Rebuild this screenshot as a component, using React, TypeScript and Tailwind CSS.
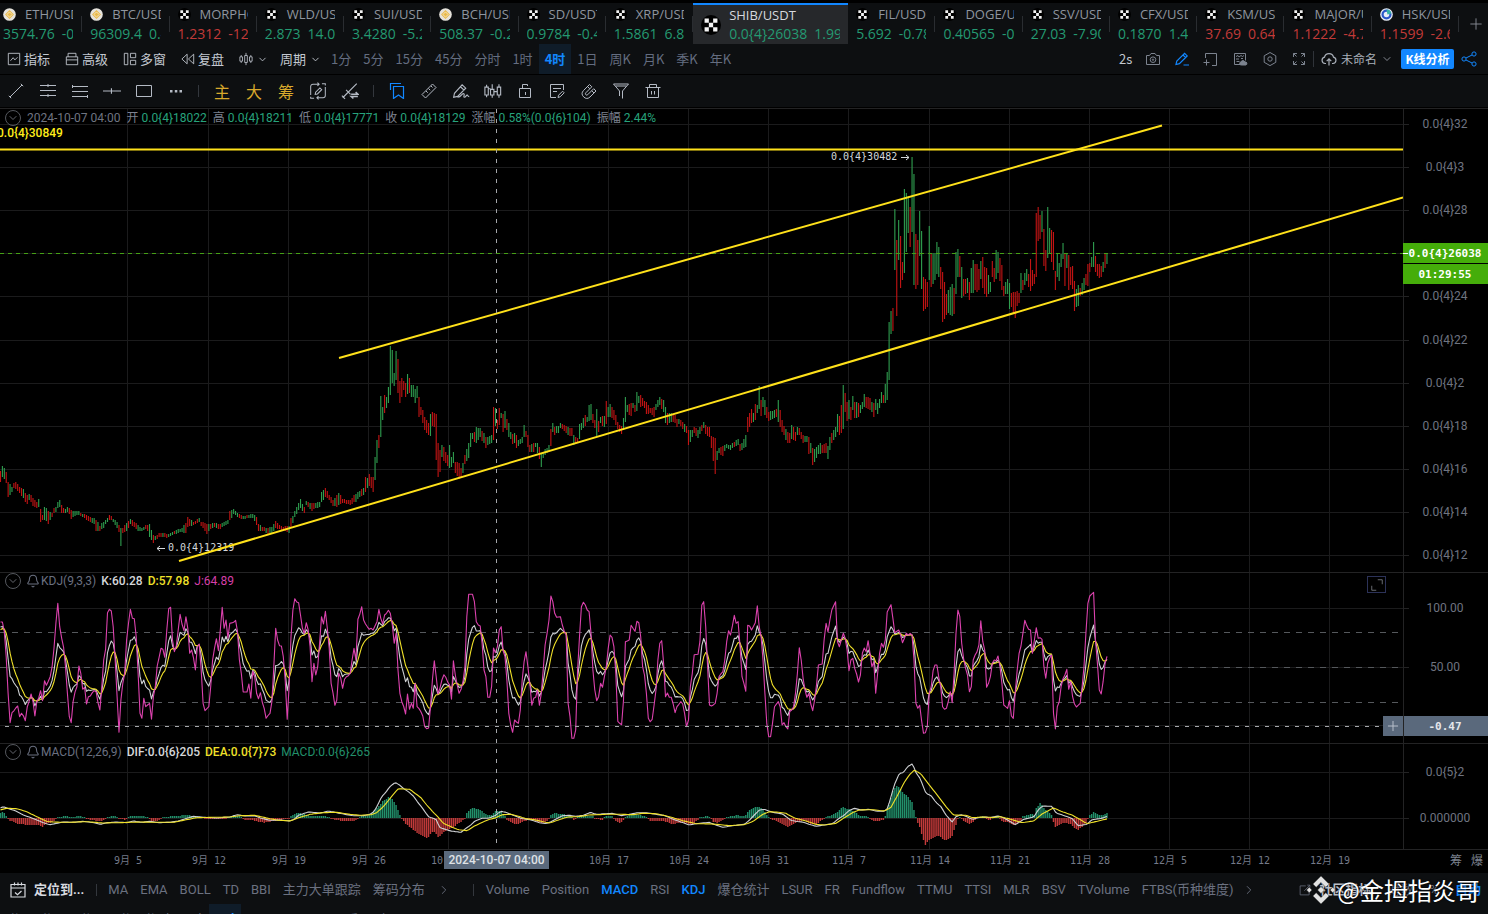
import type { ReactNode } from "react";
import { ChevronDown, ChevronRight, Plus, Bell } from "lucide-react";

/* ------------------------------------------------------------------ */
/* Icons                                                               */
/* ------------------------------------------------------------------ */

function Icon({ children, className = "size-4" }: { children: ReactNode; className?: string }) {
  return (
    <svg viewBox="0 0 16 16" className={className} fill="none" stroke="currentColor" strokeWidth="1" aria-hidden="true">
      {children}
    </svg>
  );
}

function CoinIcon({ kind, className }: { kind: string; className: string }) {
  if (kind === "gold") {
    return (
      <svg viewBox="0 0 14 14" className={className} aria-hidden="true">
        <circle cx="7" cy="7" r="6.8" fill="#e6e3dc" />
        <path d="M7 2.2 11.8 7 7 11.8 2.2 7z" fill="#e9b949" />
        <path d="M7 4.2 9.8 7 7 9.8 4.2 7z" fill="none" stroke="#f4ead0" strokeWidth="0.9" />
      </svg>
    );
  }
  if (kind === "ring") {
    return (
      <svg viewBox="0 0 14 14" className={className} aria-hidden="true">
        <circle cx="7" cy="7" r="6.8" fill="#e8edf6" />
        <circle cx="7" cy="7" r="4.2" fill="none" stroke="#2b57c8" strokeWidth="2.4" />
        <circle cx="7" cy="7" r="2" fill="#e8edf6" />
        <path d="M7 1.600 A5.400 5.400 0 0 1 12.200 6 L8 7z" fill="#35b3a4" />
      </svg>
    );
  }
  return (
    <svg viewBox="0 0 14 14" className={className} aria-hidden="true">
      <circle cx="7" cy="7" r="7" fill="#000" />
      <path d="M2.500 2.500h3v3h-3zM8.500 2.500h3v3h-3zM5.500 5.500h3v3h-3zM2.500 8.500h3v3h-3zM8.500 8.500h3v3h-3z" fill="#f2f2f2" />
    </svg>
  );
}

/* ------------------------------------------------------------------ */
/* Market tabs                                                         */
/* ------------------------------------------------------------------ */

type Market = { name: string; price: string; change: string; up: boolean; kind: string; active?: boolean };

const MARKETS: Market[] = [
  { name: "ETH/USDT", price: "3574.76", change: "-0.73%", up: true, kind: "gold" },
  { name: "BTC/USDT", price: "96309.4", change: "0.41%", up: true, kind: "gold" },
  { name: "MORPHO/USDT", price: "1.2312", change: "-12.7%", up: false, kind: "x" },
  { name: "WLD/USDT", price: "2.873", change: "14.05%", up: true, kind: "x" },
  { name: "SUI/USDT", price: "3.4280", change: "-5.27%", up: true, kind: "x" },
  { name: "BCH/USDT", price: "508.37", change: "-0.24%", up: true, kind: "gold" },
  { name: "SD/USDT", price: "0.9784", change: "-0.45%", up: true, kind: "x" },
  { name: "XRP/USDT", price: "1.5861", change: "6.81%", up: true, kind: "x" },
  { name: "SHIB/USDT", price: "0.0{4}26038", change: "1.99%", up: true, kind: "x", active: true },
  { name: "FIL/USDT", price: "5.692", change: "-0.78%", up: true, kind: "x" },
  { name: "DOGE/USDT", price: "0.40565", change: "-0.52%", up: true, kind: "x" },
  { name: "SSV/USDT", price: "27.03", change: "-7.90%", up: true, kind: "x" },
  { name: "CFX/USDT", price: "0.1870", change: "1.41%", up: true, kind: "x" },
  { name: "KSM/USDT", price: "37.69", change: "0.64%", up: false, kind: "x" },
  { name: "MAJOR/USDT", price: "1.1222", change: "-4.71%", up: false, kind: "x" },
  { name: "HSK/USDT", price: "1.1599", change: "-2.63%", up: false, kind: "ring" },
];

function MarketTab({ market }: { market: Market }) {
  const tone = market.up ? "text-[#249a72]" : "text-[#c23a38]";
  if (market.active) {
    return (
      <button
        type="button"
        aria-pressed="true"
        className="flex w-[155px] shrink-0 items-center gap-2 border-t-2 border-[#1287ff] bg-[#26282b] pr-2 pl-2"
      >
        <CoinIcon kind={market.kind} className="size-5 shrink-0" />
        <span className="flex min-w-0 flex-col overflow-hidden text-left">
          <span className="h-[18px] text-[13px] leading-[18px] font-medium text-[#d6d9de]">{market.name}</span>
          <span className={`flex h-[19px] gap-[7px] text-[14px] leading-[19px] whitespace-nowrap ${tone}`}>
            <span>{market.price}</span>
            <span>{market.change}</span>
          </span>
        </span>
      </button>
    );
  }
  return (
    <button type="button" className="flex min-w-[70px] flex-1 items-center pl-2">
      <span className="flex min-w-0 flex-1 flex-col overflow-hidden text-left whitespace-nowrap">
        <span className="flex h-[19px] items-center gap-[9px]">
          <CoinIcon kind={market.kind} className="size-[13px] shrink-0" />
          <span className="text-[13px] leading-[19px] text-[#8f959f]">{market.name}</span>
        </span>
        <span className={`flex h-[19px] gap-[7px] text-[14px] leading-[19px] ${tone}`}>
          <span>{market.price}</span>
          <span>{market.change}</span>
        </span>
      </span>
      <span className="ml-2 h-4 w-px shrink-0 bg-[#2a2d31]" />
    </button>
  );
}

function MarketStrip() {
  return (
    <nav aria-label="行情" className="flex h-[41px] shrink-0 overflow-hidden bg-[#0d0f11] font-['Open_Sans','Noto_Sans_CJK_SC',sans-serif]">
      <div className="-ml-[5px] flex min-w-0 flex-1">
        {MARKETS.map((m) => (
          <MarketTab key={m.name} market={m} />
        ))}
      </div>
      <button type="button" aria-label="添加" className="flex w-[29px] shrink-0 items-center justify-center pl-1 text-[#8a8f98]">
        <Plus className="size-[18px]" strokeWidth={1.2} />
      </button>
    </nav>
  );
}

/* ------------------------------------------------------------------ */
/* Main toolbar                                                        */
/* ------------------------------------------------------------------ */

const INTERVALS = ["1分", "5分", "15分", "45分", "分时", "1时", "4时", "1日", "周K", "月K", "季K", "年K"];

function IntervalRow() {
  return (
    <div className="flex h-full">
      {INTERVALS.map((label) => (
        <button
          key={label}
          type="button"
          className={
            label === "4时"
              ? "bg-[#0f1c29] px-1.5 font-bold text-[#1287ff]"
              : "px-1.5 text-[#646d80]"
          }
        >
          {label}
        </button>
      ))}
    </div>
  );
}

function TextTool({ label, children }: { label: string; children: ReactNode }) {
  return (
    <button type="button" className="flex items-center gap-[3px] text-[#c3c8d0]">
      <Icon className="size-[14px]">{children}</Icon>
      <span>{label}</span>
    </button>
  );
}

function MainToolbar() {
  return (
    <div className="flex h-[30px] shrink-0 items-stretch bg-[#0d0f11] text-[13px] whitespace-nowrap">
      <div className="flex gap-[15px] pl-[7px]">
        <TextTool label="指标">
          <path d="M1.5 1.5h13v13h-13zM4 10l3-3.5 2 2.5 3-3" />
        </TextTool>
        <TextTool label="高级">
          <path d="M1.5 5.5h13v9h-13zM3.5 5.5v-4h9v4M1.5 9h13" />
        </TextTool>
        <TextTool label="多窗">
          <path d="M1.5 1.5h4v13h-4zM8.5 1.5h6v5h-6zM8.5 9.5h6v5h-6z" />
        </TextTool>
        <TextTool label="复盘">
          <path d="M7 2.5v11L1 8zM14.5 2.5v11L8.5 8z" />
        </TextTool>
        <div className="flex gap-3">
          <button type="button" aria-label="图表类型" className="flex items-center gap-1 text-[#b8bdc6]">
            <Icon className="size-[14px]">
              <path d="M1 5.5h3v5H1zM2.5 3.5v2M2.5 10.5v2M6.5 4h3v8h-3zM8 1v3M8 12v3M12 5.5h3v5h-3zM13.5 3.5v2M13.5 10.5v2" />
            </Icon>
            <ChevronDown className="size-[11px]" />
          </button>
          <button type="button" className="flex items-center gap-1 text-[#c3c8d0]">
            周期
            <ChevronDown className="size-[11px]" />
          </button>
        </div>
      </div>
      <div className="ml-1">
        <IntervalRow />
      </div>
      <div className="ml-auto flex items-center text-[#7c838f]">
        <span className="w-[26px] text-[#c3c8d0]">2s</span>
        <button type="button" aria-label="截图" className="w-[29px]">
          <Icon>
            <path d="M1.5 4.5h3l1.5-2h4l1.5 2h3v9h-13z" />
            <circle cx="8" cy="8.7" r="2.8" />
            <circle cx="8" cy="8.7" r="0.7" />
          </Icon>
        </button>
        <button type="button" aria-label="画线" className="w-[29px] text-[#1287ff]">
          <Icon>
            <path d="M2 13.5l.8-3.4L10.6 2.3l2.6 2.6-7.8 7.8zM9 4l2.6 2.6M9.5 14h5.5" strokeWidth="1.2" />
          </Icon>
        </button>
        <button type="button" aria-label="新建窗口" className="w-[29px]">
          <Icon>
            <path d="M2.5 7V2.500h11v12H9M.5 11.500h6M3.500 8.500v6" />
          </Icon>
        </button>
        <button type="button" aria-label="数据面板" className="w-[30px]">
          <Icon>
            <path d="M2.500 2.500h11v7M8 13.500H2.500v-11M4 5.500l2-1 1 1.500 2-1.500 1.500 1 1.500-1M4 8h3M4.500 10.500h3M9 7.500h2" />
            <path d="M9 11a2 2 0 0 1 3.800 0a1.500 1.500 0 0 1 1 3h-4.500a1.500 1.500 0 0 1-.3-3z" fill="currentColor" />
          </Icon>
        </button>
        <button type="button" aria-label="设置" className="w-[29px]">
          <Icon>
            <path d="M8 1.500l5.800 3.300v6.500L8 14.600l-5.800-3.300V4.800z" />
            <circle cx="8" cy="8" r="2.200" />
          </Icon>
        </button>
        <button type="button" aria-label="全屏" className="w-[22px]">
          <Icon>
            <path d="M2.500 6V2.500H6M2.500 2.500l3 3M10 2.500h3.500V6M13.500 2.500l-3 3M2.500 10v3.500H6M2.500 13.500l3-3M10 13.500h3.500V10M13.500 13.500l-3-3" />
          </Icon>
        </button>
        <span className="mr-[7px] h-4 w-px bg-[#2f3339]" />
        <button type="button" className="flex items-center gap-1 text-[#a9afb9]">
          <Icon>
            <path d="M5 12.500H4A3.200 3.200 0 0 1 3.500 6.200 4.600 4.600 0 0 1 12.500 6.200 3.200 3.200 0 0 1 12 12.500h-1M8 14.500V8M5.700 10.200L8 7.900l2.300 2.300" strokeWidth="1.200" />
          </Icon>
          <span className="text-[12px]">未命名</span>
          <ChevronDown className="size-3" strokeWidth={1.5} />
        </button>
        <button type="button" className="ml-2 h-5 w-[53px] rounded-[2px] bg-[#1287ff] text-[12px] font-bold text-white">
          K线分析
        </button>
        <button type="button" aria-label="分享" className="mr-[11px] ml-[7px] text-[#1287ff]">
          <Icon>
            <circle cx="3" cy="8" r="2.100" />
            <circle cx="13" cy="3" r="2.100" />
            <circle cx="13" cy="13" r="2.100" />
            <path d="M5 7l6-3M5 9l6 3" />
          </Icon>
        </button>
      </div>
    </div>
  );
}

/* ------------------------------------------------------------------ */
/* Drawing toolbar                                                     */
/* ------------------------------------------------------------------ */

function DrawTool({ label, children, tone = "text-[#b4bac4]" }: { label: string; children: ReactNode; tone?: string }) {
  return (
    <button type="button" aria-label={label} className={`flex w-8 items-center justify-center ${tone}`}>
      {children}
    </button>
  );
}

function DrawToolbar() {
  return (
    <div className="mt-px flex h-8 shrink-0 items-stretch bg-[#0d0f11]">
      <DrawTool label="线段">
        <Icon>
          <path d="M2 14L14 2M.8 12.800l2.400 2.400M12.800.8l2.400 2.400" />
        </Icon>
      </DrawTool>
      <DrawTool label="平行线">
        <Icon>
          <path d="M0 2.500h16M0 7.500h16M0 12.500h16" />
          <path d="M7 1.500h2v2H7zM7 11.500h2v2H7z" fill="currentColor" stroke="none" />
        </Icon>
      </DrawTool>
      <DrawTool label="水平通道">
        <Icon>
          <path d="M0 3.500h16M0 8.500h16M0 13.500h16M.5 2v3M15.500 12v3" />
        </Icon>
      </DrawTool>
      <DrawTool label="水平线">
        <Icon className="size-[18px]">
          <path d="M0 8h16M7.500 5.500v5" />
        </Icon>
      </DrawTool>
      <DrawTool label="矩形">
        <Icon>
          <path d="M.5 2.500h15v11H.5z" />
        </Icon>
      </DrawTool>
      <DrawTool label="更多">
        <Icon>
          <path d="M2 7h2.500v2.500H2zM6.800 7h2.500v2.500H6.800zM11.500 7H14v2.500h-2.500z" fill="currentColor" stroke="none" />
        </Icon>
      </DrawTool>
      <span className="mr-[7px] ml-1.5 h-3 w-px self-center bg-[#33373d]" />
      {["主", "大", "筹"].map((t) => (
        <button key={t} type="button" className="w-8 text-[16px] text-[#d9a92c]">
          {t}
        </button>
      ))}
      <DrawTool label="循环画线">
        <Icon className="size-[18px]">
          <path d="M1.500 11.500V4a2 2 0 0 1 2-2H9M7.500.5L9 2 7.500 3.500M14.500 4.500V12a2 2 0 0 1-2 2H7M8.500 12.500L7 14l1.500 1.500M11.500 1.500h3v1.500M1.500 13v1.500h3M5.500 11l.4-2 3.800-3.800 1.600 1.600L7.500 10.600z" strokeWidth="0.9" />
        </Icon>
      </DrawTool>
      <DrawTool label="转换画线">
        <Icon className="size-[18px]">
          <path d="M1.500 14L14 1.500M.8 12.200l2.800 2.800M4.500 7l4 4" />
          <path d="M9 10.800h6l-2-1.800M15 12.800H9l2 1.800" strokeWidth="1.300" />
        </Icon>
      </DrawTool>
      <span className="mx-[7px] h-3 w-px self-center bg-[#33373d]" />
      <DrawTool label="收藏" tone="text-[#1287ff]">
        <Icon>
          <path d="M1.500 7V.5H12M4.500 3.500h10v12l-5-3.500-5 3.500z" strokeWidth="1.200" />
        </Icon>
      </DrawTool>
      <DrawTool label="测量">
        <Icon>
          <path d="M1 11.500L11.500 1l3.500 3.500L4.500 15zM5 8l1.700 1.700M7.500 5.500l1.700 1.700M10 3l1.500 1.500" />
        </Icon>
      </DrawTool>
      <DrawTool label="画笔">
        <Icon className="size-[18px]">
          <path d="M1.500 13.500l.7-3.500L9 2.500l3.200 3L5 12.800zM7.500 4.200l3.200 3M5 13.500c3.500 0 3.500-3.500 5.200-3.200s-.5 3 .8 3.200 1.500-2 2.500-1.800.3 1.300 1.800 1.300" />
        </Icon>
      </DrawTool>
      <DrawTool label="K线样式">
        <Icon className="size-[18px]">
          <path d="M.8 4.500h3v7h-3zM2.300 2.500v2M2.300 11.500v2M5.800 6.500h3v5h-3zM7.300 2v4.500M7.300 11.500V14M11.800 4.500h3v7h-3zM13.300 2v2.500M13.300 11.500V14M3.800 6h2M8.800 8.500h3" />
        </Icon>
      </DrawTool>
      <DrawTool label="锁定">
        <Icon>
          <path d="M2.500 5.500h11v9h-11zM5.500 5.500v-4h5V3M8.500 9v3" />
        </Icon>
      </DrawTool>
      <DrawTool label="编辑">
        <Icon>
          <path d="M14.500 7V1.500H1.500v13H7M4 5.500h8M4 8.500h4M9 14.500l.6-2.300 4-4 1.600 1.600-4 4z" />
        </Icon>
      </DrawTool>
      <DrawTool label="磁吸">
        <Icon>
          <path d="M8.500 1.500L2.500 7.500a4.600 4.600 0 0 0 6.500 6.500L15 8l-2.300-2.300-6 6a1.300 1.300 0 0 1-1.900-1.900l6-6zM6.500 3.500l2.300 2.300M10.700 7.700L13 10" />
        </Icon>
      </DrawTool>
      <DrawTool label="筛选">
        <Icon>
          <path d="M.5 1h15L9.500 8v7.500M6.500 13V8L.5 1M2.500 3h11" />
        </Icon>
      </DrawTool>
      <DrawTool label="删除">
        <Icon>
          <path d="M.5 4.500h15M2.500 4.500v10h11v-10M4.500 4.500v-3h7v3M6.500 8v3.500M9.500 8v3.500" />
        </Icon>
      </DrawTool>
    </div>
  );
}

/* ------------------------------------------------------------------ */
/* Chart data. Runs of samples; x and y are in `unit` parts of a pixel */
/* ------------------------------------------------------------------ */

type Run = { left: number; unit?: number; data: string };
type Sample = number[];

const STEP = 1.911;
const LAST_X = 1108;

function readRuns(runs: Run[]): Sample[] {
  const out: Sample[] = [];
  for (const run of runs) {
    for (const token of run.data.trim().split(/\s+/)) {
      const [x, ...rest] = token.split(",").map(Number);
      out.push([run.left + x / (run.unit ?? 3), ...rest]);
    }
  }
  return out;
}

/* With `snap`, a bar takes the values of a sample that lies within its slot. */
function resample(samples: Sample[], snap = false): Sample[] {
  const out: Sample[] = [];
  let k = 0;
  for (let x = 0.5; x <= LAST_X; x += STEP) {
    while (k < samples.length - 2 && samples[k + 1][0] < x) k++;
    const a = samples[k];
    const b = samples[k + 1];
    let t = Math.min(1, Math.max(0, (x - a[0]) / (b[0] - a[0])));
    if (snap && Math.abs(x - a[0]) <= STEP / 2) t = 0;
    else if (snap && Math.abs(b[0] - x) <= STEP / 2) t = 1;
    out.push([x, ...a.slice(1).map((v, i) => v + (b[i + 1] - v) * t)]);
  }
  return out;
}

const J_RUNS: Run[] = [
  {
    left: 0,
    data: `0,186 5,186 10,176 14,215 18,290 22,400 25,462 31,488 38,458 47,444 55,438 61,470 67,460 77,482 84,440 92,402 98,425 106,468 112,425 124,392 130,422 136,362 140,376 150,350 156,320 160,265 168,190 176,130 181,200 188,262 196,320 202,400 208,470 214,488 220,425 228,380 238,318 244,340 250,388 256,382 260,432 266,410 272,408 280,392 286,395 290,440 295,428 301,450 306,380 311,300 315,268 319,250 324,158 329,148 335,153 340,200 345,300 350,410 358,517 364,420 368,370 376,340 382,240 387,190 391,148 398,175 404,176 409,230 414,340 420,460 427,475 432,415 440,440 446,430 454,478 460,410 466,380 473,318 480,292 485,265 491,268 496,292 502,210 508,146 511,142 516,240 523,275 530,258 536,210 541,163 549,192 554,212 559,170 565,205 568,280 577,270 586,330 592,260 598,252 604,330 610,430 617,452 624,440 630,380 636,300 643,265 649,236 656,272 662,210 667,142 673,205 679,180 685,235 692,190 700,187 706,181 712,215 718,300 724,340 730,396 742,396 748,372 754,415 758,334 764,350 770,400 775,416 782,398 790,445 799,475 808,460 814,425 820,320 826,205 832,240 838,257 845,258 850,290 856,360 862,478 868,380 873,230 877,150 884,116 890,126 896,128 900,165 905,205 912,220 920,188 926,210 931,260 937,365 943,310 946,345 951,320 957,250 963,170 970,192 977,154 983,205 990,265 996,370 1003,436 1008,420 1014,340 1019,335 1027,385 1034,358 1042,350 1052,340 1058,300 1063,265 1067,300 1070,230 1076,178 1084,140 1090,180 1098,192 1106,208 1111,205 1115,256 1121,210 1129,185 1135,148 1141,175 1147,192 1156,165 1166,151 1173,160 1177,195 1184,250 1187,220 1192,330 1200,400 1208,425 1216,462 1223,402 1229,448 1234,430 1240,445 1246,370 1254,440 1262,455 1268,468 1274,500 1280,506 1286,504 1291,440 1297,360 1303,302 1310,350 1317,402 1324,360 1331,344 1338,352 1346,375 1353,418 1361,302 1366,345 1371,375 1376,400 1383,388 1388,365 1393,320 1398,170 1402,125 1406,103 1417,103 1422,125 1428,185 1434,195 1440,198 1447,250 1452,330 1458,350 1464,412 1470,412 1475,380 1480,264 1486,278`,
  },
  {
    left: 496,
    data: `2,260 8,210 13,200 18,255 25,290 31,360 38,460 44,495 50,517 55,480 60,486 67,490 72,450 76,360 82,305 88,275 94,320 99,370 106,436 113,415 119,412 125,390 131,436 137,400 143,330 150,255 157,180 163,108 170,125 176,160 182,172 193,170 200,195 208,225 211,320 215,430 221,470 227,535 232,535 238,510 241,460 246,330 250,230 256,140 260,127 266,135 272,150 278,155 283,220 290,330 297,390 303,422 309,410 316,370 322,382 328,320 334,265 341,225 347,232 353,260 358,340 364,484 370,490 376,494 380,420 384,320 391,245 397,240 403,196 410,205 416,214 422,184 428,188 434,230 440,320 446,345 451,400 457,475 463,485 469,478 475,435 480,390 484,300 490,250 496,242 500,310 506,410 511,388 518,412 524,412 530,432 538,458 545,440 553,425 558,432 564,460 570,500 575,480 580,410 587,340 593,284 606,283 611,245 616,135 622,125 627,200 632,320 637,370 643,435 649,438 656,430 662,400 668,350 680,335 686,300 692,245 700,212 706,225 713,166 719,190 724,185 730,260 736,350 742,370 748,394 752,300 757,196 763,198 769,210 776,188 782,137 788,200 794,230 800,300 806,400 812,490 818,530 826,530 832,490 838,440 844,425 850,440 856,495 862,488 868,500 873,507 878,475 884,455 893,440 898,400 902,340 908,263 914,300 919,355 926,390 934,412 938,400 944,432 951,452 957,420 963,375 970,315 976,312 982,240 988,190 993,187 998,216 1004,180 1010,150 1016,125 1021,180 1027,245 1033,260 1039,220 1046,235 1052,270 1059,332 1066,300 1073,295 1079,325 1086,366 1092,345 1096,295 1102,264 1109,275 1114,242 1120,280 1128,320 1134,305 1142,400 1148,280 1154,250 1162,262 1166,240 1170,165 1178,145 1182,155 1187,134 1192,175 1198,218 1206,210 1212,225 1217,248 1223,235 1228,215 1235,226 1242,220 1249,225 1253,300 1258,430 1264,445 1273,436 1280,520 1286,518 1292,500 1297,400 1304,380 1310,332 1316,315 1324,315 1330,352 1336,380 1342,440 1348,448 1354,445 1361,395 1366,428 1372,340 1378,220 1384,150 1388,128 1393,170 1398,250 1406,325 1412,345 1418,395 1423,380 1428,392 1434,300 1440,285 1450,255 1456,182 1461,245 1468,270 1474,382 1480,370 1486,350`,
  },
  {
    left: 992,
    data: `0,310 7,300 14,302 19,288 24,320 28,370 32,425 38,435 44,445 50,422 55,468 60,468 65,475 70,400 76,330 84,280 92,220 100,181 107,208 112,187 118,210 124,280 128,240 133,203 139,235 146,233 152,238 157,320 163,355 168,310 176,285 180,350 184,460 188,507 192,490 196,440 202,425 208,380 214,356 220,345 226,328 232,388 238,365 244,410 250,432 256,441 262,430 268,380 276,320 283,220 290,130 296,108 302,97 306,150 310,240 316,310 323,390 329,402 336,365 341,310 348,272`,
  },
];

const DIF_RUNS: Run[] = [
  {
    left: 0,
    data: `0,745 10,740 20,744 45,752 70,765 95,774 115,782 135,790 150,794 165,791 190,786 220,787 250,784 280,788 303,793 320,788 350,786 380,788 400,783 425,787 450,784 475,788 510,787 535,783 560,775 580,769 610,772 650,774 690,771 712,764 735,768 765,768 785,775 810,781 840,780 870,783 885,776 895,766 925,756 960,759 985,753 1010,758 1035,763 1060,767 1090,767 1110,763 1122,755 1133,735 1145,710 1157,698 1168,682 1180,671 1187,668 1200,676 1210,685 1225,695 1240,708 1252,725 1268,745 1285,770 1300,775 1310,780 1318,802 1335,808 1353,813 1384,817 1396,806 1410,797 1425,783 1445,775 1465,775 1480,769 1486,767`,
  },
  {
    left: 496,
    data: `5,760 15,754 30,757 50,765 75,775 95,778 110,781 130,788 150,791 165,785 180,777 200,767 220,766 240,769 262,766 283,757 300,763 350,760 375,767 400,763 425,758 460,759 485,764 505,766 530,777 555,786 580,795 600,791 640,787 660,795 680,802 710,797 745,793 760,781 775,765 790,750 805,748 830,757 860,762 885,781 900,784 920,786 940,793 960,799 985,795 1010,791 1025,778 1045,765 1060,751 1075,745 1095,750 1120,748 1140,753 1165,754 1175,745 1185,710 1195,675 1210,640 1222,638 1235,620 1250,611 1258,635 1272,655 1290,700 1305,707 1320,727 1335,740 1350,765 1368,786 1380,770 1395,764 1410,769 1430,778 1450,772 1470,771 1486,774`,
  },
  {
    left: 992,
    data: `0,771 20,768 40,776 70,794 95,778 125,771 140,748 152,738 180,739 192,759 220,768 240,775 258,797 285,793 300,779 330,775 348,768`,
  },
];

const DEA_RUNS: Run[] = [
  {
    left: 0,
    data: `0,750 20,745 50,746 80,755 110,770 140,784 160,786 200,787 260,785 310,789 360,788 420,786 480,787 520,787 555,780 590,773 640,772 690,771 720,767 765,766 800,774 830,780 870,783 900,772 930,763 970,758 1010,757 1050,763 1080,766 1115,764 1130,758 1150,740 1165,722 1180,703 1195,686 1230,688 1245,700 1262,712 1280,735 1300,757 1315,772 1330,790 1350,799 1375,809 1402,812 1420,800 1440,790 1465,779 1486,774`,
  },
  {
    left: 496,
    data: `0,772 20,764 45,763 65,768 90,776 115,779 140,785 160,789 190,779 215,771 245,770 280,765 330,763 380,763 410,764 440,760 480,761 520,770 560,782 600,791 650,792 700,797 745,794 770,785 800,763 820,755 850,757 870,760 895,774 930,783 960,793 985,795 1020,790 1045,773 1070,758 1090,750 1130,749 1165,753 1185,742 1205,705 1225,667 1240,645 1255,630 1275,642 1300,675 1325,707 1350,740 1372,765 1410,766 1430,773 1460,771 1486,772`,
  },
  {
    left: 992,
    data: `0,773 25,770 50,776 90,788 125,783 150,762 185,744 210,755 240,765 265,779 285,791 310,785 348,776`,
  },
];

const HIST_RUNS: Run[] = [
  {
    left: 0,
    data: `0,14 10,18 18,8 24,0 30,-8 55,-18 80,-20 110,-20 128,-26 140,-18 160,-10 170,2 175,4 205,5 212,2 240,6 262,-3 290,-9 303,-10 315,-4 322,4 345,5 355,-3 375,-5 385,4 410,6 440,4 455,-8 470,-9 482,-3 490,4 530,5 545,8 560,10 575,6 600,4 620,-4 650,-4 670,-4 690,3 700,8 720,6 730,-4 760,-7 790,-14 820,-9 850,-4 865,-3 875,8 890,16 910,12 930,7 960,7 980,5 1000,-4 1030,-9 1060,-9 1075,-3 1085,6 1110,8 1120,18 1135,35 1150,52 1165,62 1175,60 1190,35 1200,8 1206,-4 1215,-15 1240,-35 1262,-52 1283,-60 1300,-38 1315,-58 1335,-40 1355,-30 1380,-14 1395,-3 1400,14 1415,30 1430,28 1445,22 1460,10 1475,10 1486,20`,
  },
  {
    left: 496,
    data: `0,20 12,20 25,10 33,-5 50,-16 65,-18 90,-8 110,-6 140,-16 158,-5 163,8 175,14 200,13 225,6 235,-8 250,5 270,7 290,7 300,-4 320,-5 330,5 350,6 358,-8 372,-15 382,-6 390,6 410,10 430,9 450,4 460,-8 485,-8 500,-8 530,-18 560,-13 585,-20 603,-8 615,4 640,5 650,-10 665,-15 680,-8 692,3 720,8 748,6 758,22 775,32 790,32 805,22 815,6 828,-4 850,-14 875,-28 890,-20 905,-12 925,-6 945,-18 960,-20 980,-4 990,4 1010,10 1025,18 1040,34 1052,28 1070,22 1090,8 1115,4 1125,-6 1142,-10 1165,-4 1170,15 1180,40 1190,80 1200,96 1210,92 1225,72 1235,65 1250,44 1256,15 1262,-8 1272,-30 1280,-60 1288,-80 1300,-66 1325,-52 1350,-68 1368,-55 1380,-20 1388,4 1400,-6 1420,-18 1435,-10 1445,4 1465,5 1475,-5 1486,-6`,
  },
  {
    left: 992,
    data: `0,4 20,3 30,-10 50,-14 70,-22 88,-8 92,5 115,12 127,10 133,30 145,45 155,30 165,22 178,12 184,-12 190,-26 205,-18 220,-14 235,-18 250,-32 260,-35 272,-25 285,-10 292,8 305,18 320,8 335,8 348,16`,
  },
];

/* Each price sample is x, high, low. */
const PRICE_RUNS: Run[] = [
  {
    left: 0,
    data: `2,452,485 10,438,470 20,455,490 27,485,530 35,500,515 40,488,505 50,487,508 60,500,520 70,508,535 80,525,552 90,522,540 100,535,558 110,545,565 114,537,560 118,545,614 125,585,600 130,585,600 136,562,600 146,572,612 155,578,590 165,560,575 178,540,560 184,555,580 195,568,580 205,562,575 213,570,598 222,572,590 235,574,584 250,582,590 262,585,600 280,595,612 290,600,633 300,618,633 308,610,628 318,600,612 330,585,600 340,596,602 350,605,625 358,615,637 363,625,677 368,625,640 380,608,632 392,596,612 402,605,622 415,615,632 425,625,632 440,615,628 450,612,650 458,645,668 462,655,684 468,648,660 480,638,650 490,638,650 500,643,653 515,637,645 530,630,642 545,624,635 555,610,640 562,592,620 572,600,618 582,605,615 595,595,607 605,605,618 620,612,642 630,612,628 642,608,620 658,612,628 672,606,618 685,600,612 692,572,600 702,568,582 715,580,592 730,588,598 745,584,594 760,582,594 770,592,615 777,612,632 790,622,632 803,625,642 815,620,638 828,603,625 840,615,628 852,620,630 865,618,640 875,595,620 885,572,592 895,550,570 901,538,565 912,562,580 920,543,555 935,550,573 945,548,565 958,545,562 965,515,545 978,504,532 988,525,540 1000,540,557 1010,525,562 1018,520,555 1030,537,548 1040,540,552 1052,540,555 1065,522,545 1080,512,532 1090,505,525 1098,470,515 1104,475,505 1108,462,498 1114,470,505 1120,470,515 1126,410,480 1132,360,430 1138,345,385 1143,228,350 1148,262,300 1154,225,278 1160,230,265 1165,202,250 1170,78,225 1177,90,190 1182,160,198 1188,93,180 1194,117,218 1200,183,250 1206,175,230 1212,182,210 1217,190,230 1222,162,222 1228,175,220 1234,195,230 1240,195,230 1245,208,250 1250,198,235 1257,230,292 1263,260,285 1270,270,310 1276,290,330 1283,310,345 1286,305,352 1291,282,348 1298,276,318 1304,280,320 1308,282,420 1314,370,470 1320,390,455 1326,376,410 1332,380,422 1338,395,430 1342,405,438 1348,375,443 1355,412,442 1361,397,430 1368,425,460 1376,430,478 1385,445,470 1391,430,460 1397,404,432 1404,370,415 1410,338,380 1418,340,358 1424,335,365 1430,322,370 1440,325,350 1450,340,370 1458,350,385 1465,350,375 1474,345,368 1480,262,360 1486,264,318`,
  },
  {
    left: 496,
    data: `3,300,328 9,265,315 15,278,295 21,283,335 26,273,325 32,298,330 38,308,352 44,335,358 50,342,372 56,340,368 62,345,383 70,360,378 76,352,368 83,316,352 90,333,350 96,345,380 104,375,395 112,368,395 120,370,382 127,370,400 135,398,440 142,398,415 150,388,405 158,375,392 163,328,378 170,310,335 176,322,345 185,318,338 195,310,325 205,315,332 215,322,345 225,325,348 233,345,376 242,355,370 250,312,358 257,308,330 266,285,318 274,290,305 280,255,302 285,252,300 290,283,310 296,300,325 300,267,348 307,302,335 315,290,310 323,288,322 330,243,312 336,262,290 345,253,290 352,270,300 358,285,315 365,305,328 374,318,342 381,295,330 387,232,305 393,255,275 403,250,288 410,248,265 416,255,275 421,216,272 427,228,250 434,225,262 440,235,258 447,243,263 454,247,282 462,265,278 472,262,290 479,252,270 486,240,262 492,232,255 500,240,275 508,262,310 515,278,314 525,280,305 535,285,308 541,297,320 550,296,312 560,305,328 570,318,340 580,330,375 590,330,350 597,320,340 604,330,355 612,322,342 622,307,325 632,320,348 642,322,350 649,348,385 655,355,461 661,392,420 668,383,398 680,378,408 690,372,385 702,376,390 715,365,380 724,357,375 735,372,392 745,358,385 751,345,380 757,290,335 764,268,308 771,280,305 776,252,300 782,255,280 788,198,268 794,240,288 800,232,262 806,240,285 812,262,295 819,275,303 828,272,298 840,268,292 849,240,305 856,300,335 865,318,345 873,335,368 879,340,368 883,306,355 890,320,360 897,335,362 903,322,345 911,325,345 920,345,368 930,348,365 937,352,402 945,370,398 952,385,435 958,388,425 965,375,402 971,368,402 978,375,400 988,368,398 998,378,418 1004,350,390 1010,340,368 1016,320,350 1022,282,335 1028,288,345 1033,318,348 1039,195,328 1045,218,275 1051,245,302 1057,240,298 1062,262,300 1068,228,270 1073,220,262 1079,245,295 1085,250,290 1092,255,280 1100,246,268 1107,222,262 1113,230,265 1120,235,270 1127,245,275 1131,248,290 1137,236,270 1145,248,282 1148,238,265 1153,205,248 1160,225,248 1165,225,260 1171,155,240`,
  },
  {
    left: 820,
    unit: 2.347,
    data: `161,6,180 164,-18,54 169,-36,32 172,-330,-12 177,-333,-150 182,-240,-12 186,-300,-180 191,-252,-96 195,-175,-120 200,-393,-142 205,-372,-260 209,-327,-247 213,-339,-220 218,-489,-264 222,-438,-105 227,-258,-93 231,-240,-105 236,-327,-192 240,-267,-93 245,-130,-28 250,-114,-40 254,-324,-70 258,-282,-120 263,-200,-100 268,-200,-120 272,-249,-147 277,-219,-130 281,-213,-96 285,-160,-93 290,-144,6 295,-78,-15 298,-63,20 303,-90,-20 308,-108,-12 313,-96,-18 317,-204,-78 321,-171,-128 325,-213,-130 330,-192,-130 334,-160,-66 339,-123,-72 344,-125,-81 348,-123,-21 352,-115,-60 356,-156,-81 361,-180,-81 366,-168,-90 370,-168,-84 375,-153,-90 379,-177,-123 384,-189,-96 388,-160,-78 393,-156,-70 398,-114,-84 402,-130,-100 406,-177,-128 411,-156,-114 415,-210,-124 420,-204,-142 425,-165,-90 429,-120,-57 433,-102,-72 438,-114,-78 442,-123,-78 447,-110,-33 451,-81,-40 456,-84,-6 460,-93,-33 465,-81,-50 469,-165,-70 474,-120,-90 478,-126,-90 483,-153,-118 487,-150,-90 491,-138,-100 496,-183,-87 500,-150,-102 505,-138,-108 509,-321,-130 513,-339,-237 518,-315,-243 522,-327,-264 527,-273,-162 531,-210,-147 536,-339,-186 541,-276,-198 546,-264,-150 550,-174,-90 554,-147,-90 558,-200,-128 562,-170,-117 567,-198,-160 572,-231,-183 576,-200,-102 581,-200,-155 585,-195,-90 590,-160,-105 594,-162,-93 598,-117,-27 603,-93,-39 607,-105,-42 612,-96,-72 616,-110,-74 621,-126,-90 625,-138,-105 630,-168,-102 634,-171,-143 639,-189,-158 643,-234,-160 648,-192,-145 652,-168,-132 657,-168,-126 661,-162,-130 666,-174,-144 670,-200,-156 676,-200,-174`,
  },
];

const PRICE_TOP = 212;
const STUDY_TOP = 452;
const GRID_X = [127, 208, 288, 368, 448, 528, 608, 688, 768, 848, 929, 1009, 1089, 1169, 1249, 1329];
const GRID_Y = [16, 59, 102, 145, 188, 232, 275, 318, 361, 404, 447, 500, 559, 617, 664, 710];
const DATES = ["9月 5", "9月 12", "9月 19", "9月 26", "", "", "10月 17", "10月 24", "10月 31", "11月 7", "11月 14", "11月 21", "11月 28", "12月 5", "12月 12", "12月 19"];

const polyline = (points: Sample[]) => points.map(([x, y]) => `${x.toFixed(1)},${y.toFixed(1)}`).join(" ");

function studyLine(runs: Run[]) {
  return polyline(resample(readRuns(runs)).map(([x, y]) => [x, STUDY_TOP + y / 3]));
}

/* K and D follow from J, since J = 3K - 2D and D is a smoothed K. */
function kdjLines() {
  const j = resample(readRuns(J_RUNS), true).map(([x, y]) => [x, STUDY_TOP + y / 3]);
  let dPrev = STUDY_TOP + 213 / 3;
  const k: Sample[] = [];
  const d: Sample[] = [];
  for (const [x, y] of j) {
    const dNow = (6 * dPrev + y) / 7;
    d.push([x, dNow]);
    k.push([x, (y + 2 * dNow) / 3]);
    dPrev = dNow;
  }
  return { j: polyline(j), k: polyline(k), d: polyline(d) };
}

function candlePaths() {
  const bars = resample(readRuns(PRICE_RUNS), true);
  let up = "";
  let down = "";
  let previous = bars[0][1] + bars[0][2];
  bars.forEach(([x, high, low], i) => {
    const noise = Math.sin(i * 12.9898) * 43758.5453;
    const r = noise - Math.floor(noise);
    const mid = high + low;
    const rising = r < 0.28 ? mid > previous : mid <= previous;
    const top = PRICE_TOP + high / 3;
    const bottom = Math.max(top + 3, PRICE_TOP + low / 3);
    const part = `M${x.toFixed(2)} ${top.toFixed(0)}V${bottom.toFixed(0)}`;
    if (rising) up += part;
    else down += part;
    previous = mid;
  });
  return { up, down };
}

function histogramPaths() {
  let up = "";
  let down = "";
  for (const [x, v] of resample(readRuns(HIST_RUNS))) {
    const h = Math.max(1, Math.round(Math.abs(v) / 3));
    if (v >= 0) up += `M${x.toFixed(2)} 710v${-h}`;
    else down += `M${x.toFixed(2)} 710v${h}`;
  }
  return { up, down };
}

const KDJ = kdjLines();
const CANDLES = candlePaths();
const HISTOGRAM = histogramPaths();
const DIF = studyLine(DIF_RUNS);
const DEA = studyLine(DEA_RUNS);

/* ------------------------------------------------------------------ */
/* Chart                                                               */
/* ------------------------------------------------------------------ */

function PlotDrawing() {
  return (
    <svg className="absolute inset-0 h-full w-full" aria-label="SHIB/USDT 4时">
      <g stroke="#1b1b1c" shapeRendering="crispEdges">
        {GRID_X.map((x) => (
          <line key={x} x1={x + 0.5} x2={x + 0.5} y1="0" y2="741" />
        ))}
        {GRID_Y.map((y) => (
          <line key={y} x1="0" x2="100%" y1={y + 0.5} y2={y + 0.5} />
        ))}
        {[0, 464, 635, 741].map((y) => (
          <line key={y} x1="0" x2="100%" y1={y + 0.5} y2={y + 0.5} stroke="#232324" />
        ))}
      </g>

      <g strokeWidth="1.1">
        <path d={CANDLES.up} stroke="#2f9e4f" />
        <path d={CANDLES.down} stroke="#c41414" />
      </g>

      <line x1="0" x2="100%" y1="145.5" y2="145.5" stroke="#45a015" strokeDasharray="4 4" shapeRendering="crispEdges" />

      <g fill="#d5d8dc" className="font-['DejaVu_Sans_Mono',monospace] text-[10px]">
        <text x="831" y="52">{"0.0{4}30482"}</text>
        <text x="168" y="443">{"0.0{4}12319"}</text>
      </g>
      <path d="M901 49.500h8M906 47l3 2.500-3 2.500M165 440.500h-8M160 438l-3 2.500 3 2.500" stroke="#d5d8dc" fill="none" />

      <g stroke="#ffe11a" strokeWidth="2">
        <line x1="0" x2="100%" y1="41.500" y2="41.500" />
        <line x1="339" y1="250" x2="1162" y2="17.500" />
        <line x1="179" y1="453" x2="1403" y2="89.500" />
      </g>

      <g stroke="#55585c" strokeDasharray="6 6" shapeRendering="crispEdges">
        <line x1="0" x2="100%" y1="524.500" y2="524.500" />
        <line x1="0" x2="100%" y1="559.500" y2="559.500" />
        <line x1="0" x2="100%" y1="594.500" y2="594.500" />
      </g>
      <g fill="none" strokeLinejoin="round" strokeWidth="1.100">
        <polyline points={KDJ.k} stroke="#cfd1d4" />
        <polyline points={KDJ.d} stroke="#f0e12a" />
        <polyline points={KDJ.j} stroke="#dc42ae" />
      </g>

      <path d={HISTOGRAM.up} stroke="#22906b" strokeWidth="1.400" />
      <path d={HISTOGRAM.down} stroke="#c23a3a" strokeWidth="1.400" />
      <g fill="none" strokeLinejoin="round" strokeWidth="1.100">
        <polyline points={DIF} stroke="#cfd1d4" />
        <polyline points={DEA} stroke="#f0e12a" />
      </g>

      <g stroke="#a6a8ab" shapeRendering="crispEdges">
        <line x1="496.500" x2="496.500" y1="0" y2="741" strokeDasharray="4 6" strokeDashoffset="-1" />
        <line x1="5" x2="100%" y1="618.500" y2="618.500" strokeDasharray="4 6" />
      </g>

      <g fill="#747a88" textAnchor="middle" className="font-['DejaVu_Sans_Mono','Noto_Sans_CJK_SC',monospace] text-[10px]">
        {DATES.map((label, i) =>
          label === "" ? null : (
            <text key={label} x={GRID_X[i] + 1} y="756">
              {label}
            </text>
          ),
        )}
        <text x="437" y="756">
          10
        </text>
      </g>
    </svg>
  );
}

function CollapseMark() {
  return (
    <button type="button" aria-label="收起" className="flex size-4 items-center justify-center rounded-full border border-[#55585e] text-[#6f737a]">
      <ChevronDown className="size-3" strokeWidth={1.8} />
    </button>
  );
}

function Quote({ label, value }: { label: string; value: string }) {
  return (
    <span className="flex gap-[3px]">
      <span className="text-[#7d8290]">{label}</span>
      <span className="text-[#27a37c]">{value}</span>
    </span>
  );
}

const PRICE_TICKS = ["32", "3", "28", "26", "24", "22", "2", "18", "16", "14", "12"];

function PriceAxis() {
  return (
    <svg className="h-full w-full" aria-label="价格轴">
      <line x1="0.5" x2="0.5" y1="0" y2="741" stroke="#232324" shapeRendering="crispEdges" />
      <g stroke="#232324" shapeRendering="crispEdges">
        {GRID_Y.map((y) => (
          <line key={y} x1="0" x2="6" y1={y + 0.5} y2={y + 0.5} />
        ))}
        {[0, 464, 635, 741].map((y) => (
          <line key={y} x1="0" x2="100%" y1={y + 0.5} y2={y + 0.5} />
        ))}
      </g>
      <g fill="#6f7480" textAnchor="middle" className="font-['Roboto',sans-serif] text-[12px]">
        {PRICE_TICKS.map((tick, i) =>
          tick === "26" ? null : (
            <text key={tick} x="42" y={GRID_Y[i] + 4}>
              {`0.0{4}${tick}`}
            </text>
          ),
        )}
        <text x="42" y="504">100.00</text>
        <text x="42" y="563">50.00</text>
        <text x="42" y="668">{"0.0{5}2"}</text>
        <text x="42" y="714">0.000000</text>
      </g>
      <g className="font-['DejaVu_Sans_Mono',monospace] text-[11px] font-bold" textAnchor="middle">
        <rect x="0" y="135" width="85" height="20" fill="#45ad0a" />
        <rect x="0" y="156" width="85" height="20" fill="#45ad0a" />
        <line x1="0" x2="5" y1="145.500" y2="145.500" stroke="#fff" />
        <text x="42" y="149" fill="#fff">{"0.0{4}26038"}</text>
        <text x="42" y="170" fill="#fff">01:29:55</text>
        <rect x="1" y="608" width="84" height="20" fill="#5a697c" />
        <text x="42" y="622" fill="#e4e6ea">-0.47</text>
      </g>
      <g fill="#7c828e" className="font-['Noto_Sans_CJK_SC',sans-serif] text-[12px]">
        <text x="47" y="757">筹</text>
        <text x="68" y="757">爆</text>
      </g>
    </svg>
  );
}

function Chart() {
  return (
    <main className="grid min-h-[763px] shrink-0 grid-cols-[minmax(0,1fr)_85px] bg-black font-['Roboto','Noto_Sans_CJK_SC',sans-serif] text-[12px] leading-[14px]">
      <div className="relative overflow-hidden">
        <PlotDrawing />
        <section aria-label="价格" className="relative h-[464px] pt-[3px]">
          <div className="flex h-[14px] items-center gap-1.5 pl-[5px] whitespace-nowrap">
            <CollapseMark />
            <span className="text-[#6f7480]">2024-10-07 04:00</span>
            <Quote label="开" value="0.0{4}18022" />
            <Quote label="高" value="0.0{4}18211" />
            <Quote label="低" value="0.0{4}17771" />
            <Quote label="收" value="0.0{4}18129" />
            <Quote label="涨幅" value="0.58%(0.0{6}104)" />
            <Quote label="振幅" value="2.44%" />
          </div>
          <div className="-ml-[3px] mt-px font-medium text-[#ffee1a]">{"0.0{4}30849"}</div>
        </section>
        <section aria-label="KDJ" className="relative flex h-[171px] items-start justify-between pt-[2px]">
          <div className="flex h-[14px] items-center gap-[5px] pl-[5px]">
            <CollapseMark />
            <span className="flex items-center gap-px text-[#6a7080]">
              <Bell className="size-[14px]" strokeWidth={1.8} />
              KDJ(9,3,3)
            </span>
            <span className="font-medium text-[#d5d7da]">K:60.28</span>
            <span className="font-medium text-[#f0e12a]">D:57.98</span>
            <span className="text-[#d63fa8]">J:64.89</span>
          </div>
          <button type="button" aria-label="放大" className="mt-[2px] mr-[17px] flex h-[17px] w-[19px] items-center justify-center border border-[#2c3258] text-[#8a8d94]">
            <Icon className="size-3">
              <path d="M9 1h6v6M1 9v6h6" />
            </Icon>
          </button>
        </section>
        <section aria-label="MACD" className="relative h-[106px] pt-[2px]">
          <div className="flex h-[14px] items-center gap-[5px] pl-[5px]">
            <CollapseMark />
            <span className="flex items-center gap-px text-[#6a7080]">
              <Bell className="size-[14px]" strokeWidth={1.8} />
              MACD(12,26,9)
            </span>
            <span className="font-medium text-[#d5d7da]">{"DIF:0.0{6}205"}</span>
            <span className="font-medium text-[#f0e12a]">{"DEA:0.0{7}73"}</span>
            <span className="text-[#22906b]">{"MACD:0.0{6}265"}</span>
          </div>
        </section>
        <button type="button" aria-label="添加提醒" className="absolute top-[608px] right-0 flex size-5 items-center justify-center bg-[#5a697c] text-[#b7bfca]">
          <Plus className="size-4" strokeWidth={1.5} />
        </button>
        <span className="absolute top-[743px] left-[444px] flex h-[18px] w-[105px] items-center justify-center bg-[#5a697c] font-medium text-[#dfe2e6]">
          2024-10-07 04:00
        </span>
      </div>
      <PriceAxis />
    </main>
  );
}

/* ------------------------------------------------------------------ */
/* Indicator bar                                                       */
/* ------------------------------------------------------------------ */

const MAIN_STUDIES = ["MA", "EMA", "BOLL", "TD", "BBI", "主力大单跟踪", "筹码分布"];
const SUB_STUDIES = ["Volume", "Position", "MACD", "RSI", "KDJ", "爆仓统计", "LSUR", "FR", "Fundflow", "TTMU", "TTSI", "MLR", "BSV", "TVolume", "FTBS(币种维度)"];

function StudyButtons({ names }: { names: string[] }) {
  return (
    <>
      {names.map((name) => (
        <button
          key={name}
          type="button"
          className={name === "MACD" || name === "KDJ" ? "font-medium text-[#1287ff]" : "text-[#6b7180]"}
        >
          {name}
        </button>
      ))}
    </>
  );
}

function IndicatorBar() {
  return (
    <footer className="mt-0.5 flex min-h-0 flex-1 flex-col bg-[#0d0f11]">
      <div className="relative flex h-[31px] shrink-0 items-center gap-3 pt-0.5 pr-[7px] pl-2.5 font-['Roboto','Noto_Sans_CJK_SC',sans-serif] text-[13px] whitespace-nowrap">
        <button type="button" className="flex items-center gap-2 font-bold text-[#d8dbe0]">
          <Icon>
            <path d="M1 2.500h14v12.500H1zM1 6h14M4.500.5v3M8 .5v3M11.500.5v3M5 10.500l2.500 2.300L11.500 9" strokeWidth="1.200" />
          </Icon>
          定位到...
        </button>
        <span className="-mr-px h-3 w-px bg-[#33373d]" />
        <StudyButtons names={MAIN_STUDIES} />
        <button type="button" aria-label="更多主图指标" className="text-[#6b7180]">
          <ChevronRight className="size-[14px]" strokeWidth={1.5} />
        </button>
        <span className="ml-2.5 h-3 w-px bg-[#33373d]" />
        <StudyButtons names={SUB_STUDIES} />
        <button type="button" aria-label="更多副图指标" className="-ml-1 text-[#6b7180]">
          <ChevronRight className="size-[14px]" strokeWidth={1.5} />
        </button>
        <div className="ml-auto flex items-center gap-4 text-[#6b7180]">
          <button type="button" className="flex items-center gap-2 font-bold text-[#b9bdc5]">
            <Icon className="size-3">
              <path d="M9 2.500H1.500v12h12V9M7 9l7.500-7.500M11 1.500h3.500V5" stroke="#6b7180" />
            </Icon>
            社区指标
          </button>
          <button type="button">对数</button>
          <button type="button">%</button>
          <button type="button" className="font-bold text-[#1287ff]">
            自动
          </button>
        </div>
        <div className="pointer-events-none absolute right-2 bottom-0 flex h-7 items-center gap-px text-white">
          <svg viewBox="0 0 28 28" className="size-[30px]" aria-hidden="true">
            <g fill="#e2e2e2" stroke="#2a2a2a" strokeWidth="0.400">
              <path d="M14 1l7.500 7.500-3 3L14 7l-4.500 4.500-3-3zM14 27l-7.500-7.500 3-3L14 21l4.500-4.500 3 3zM14 10.800l3.200 3.200-3.200 3.200-3.200-3.200zM3 11.500L5.500 14 3 16.500.5 14zM25 11.500l2.500 2.500-2.500 2.500-2.500-2.500z" />
            </g>
          </svg>
          <span className="font-['Noto_Sans_CJK_SC',sans-serif] text-[24px] leading-7 [text-shadow:0_0_2px_#000]">@金拇指炎哥</span>
        </div>
      </div>
      <div className="-ml-[5px] h-[30px] shrink-0 text-[13px]">
        <IntervalRow />
      </div>
    </footer>
  );
}

export default function App() {
  return (
    <div className="flex h-screen flex-col overflow-hidden bg-black pt-[3px] font-['Noto_Sans_CJK_SC',sans-serif]">
      <MarketStrip />
      <MainToolbar />
      <DrawToolbar />
      <div className="mt-px flex flex-col">
        <Chart />
      </div>
      <IndicatorBar />
    </div>
  );
}
